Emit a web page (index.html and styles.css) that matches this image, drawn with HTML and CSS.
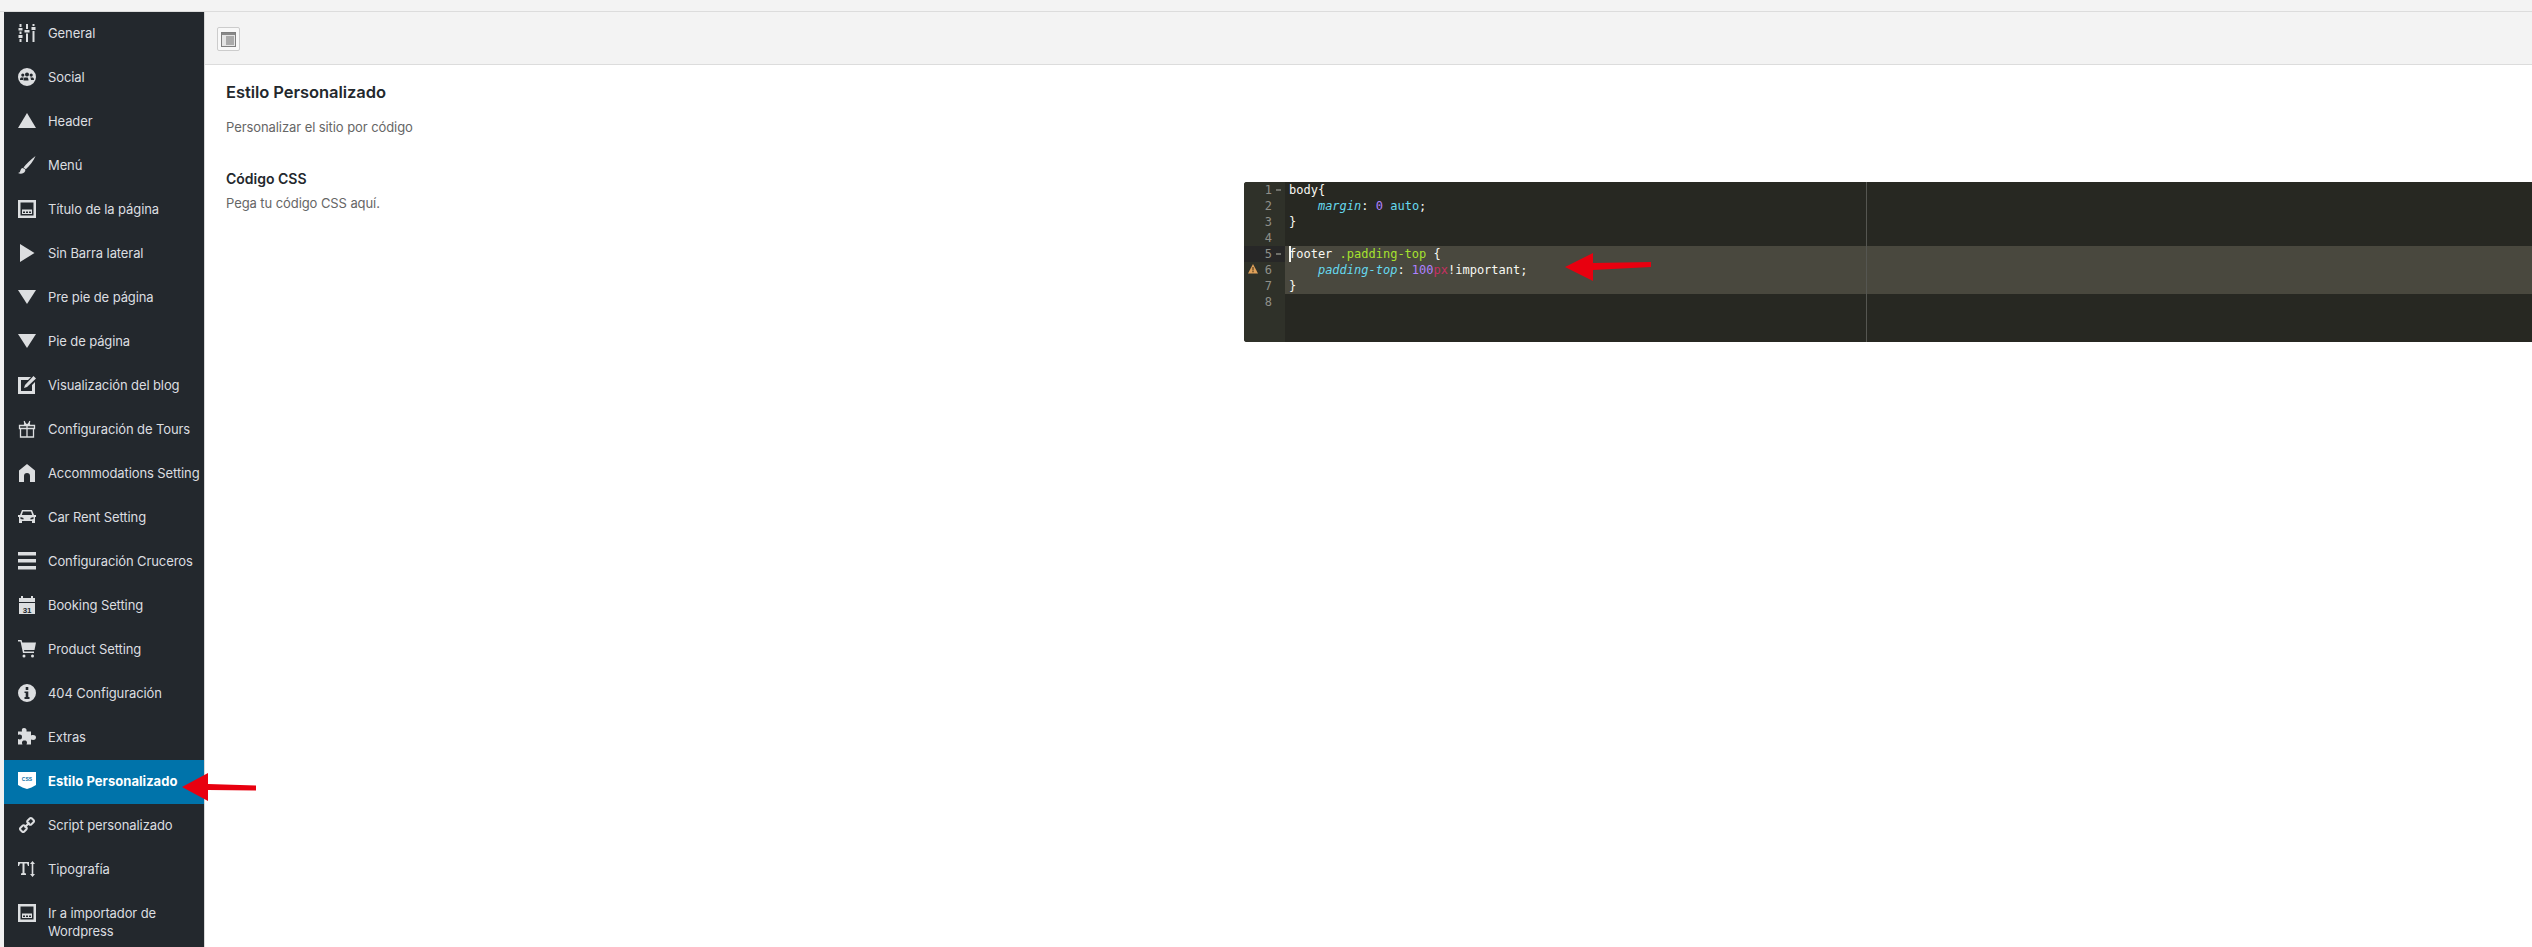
FILE: index.html
```html
<!DOCTYPE html>
<html lang="es">
<head>
<meta charset="utf-8">
<title>Estilo Personalizado</title>
<link rel="stylesheet" href="styles.css">
</head>
<body>
<div class="topstrip"></div>
<div class="layout">
  <nav class="sidebar">
    <a class="item"><svg class="ico" viewBox="0 0 18 18"><path d="M1.500 0h2v3h-2zM.5 4h4v2.500h-4zM1.500 7.500h2V10h-2zM.5 11h4v3h-4zM1.500 15h2v3h-2zM8 0h2v5H8zM6.500 6h5v2.500h-5zM8 9.500h2V18H8zM14.500 0h2v2h-2zM13.500 3h4v3h-4zM14.500 7h2v11h-2z"/></svg><span>General</span></a>
    <a class="item"><svg class="ico" viewBox="0 0 18 18"><path fill-rule="evenodd" d="M9 0a9 9 0 1 1 0 18A9 9 0 0 1 9 0zM9 4.500a2 2 0 1 0 0 4 2 2 0 0 0 0-4zM4.800 5.500a1.600 1.600 0 1 0 0 3.200 1.600 1.600 0 0 0 0-3.200zM13.200 5.500a1.600 1.600 0 1 0 0 3.200 1.600 1.600 0 0 0 0-3.200zM3 9.500c-.8.500-1 1.500-1 2.500h3c0-1 .2-1.700.8-2.500zM6.500 9.500c-.8.700-1 2-1 3h5c0-1-.2-2.300-1-3zM12.200 9.500c.6.800.8 1.500.8 2.500h3c0-1-.2-2-1-2.500z"/></svg><span>Social</span></a>
    <a class="item"><svg class="ico" viewBox="0 0 18 18"><path d="M9 1l9 15H0z"/></svg><span>Header</span></a>
    <a class="item"><svg class="ico" viewBox="0 0 18 18"><path d="M17.500 0C13 3.500 8 8 5.500 11.500l2.300 1.800C11.500 10 15.500 5 17.500 0zM4.700 12c-2.200.4-2.200 2.800-2.700 3.800-.3.700-1 1-2 1.200 2.500 1.200 6 .8 7.200-2 .3-.8 0-1.600-.5-2z"/></svg><span>Menú</span></a>
    <a class="item"><svg class="ico" viewBox="0 0 18 18"><path fill-rule="evenodd" d="M0 0h18v18H0zM2.500 2.500v13h13v-13zM4 9.500h10V14H4zM5 11.500v1.500h2v-1.500zM8 11.500v1.500h2v-1.500zM11 11.500v1.500h2v-1.500z"/></svg><span>Título de la página</span></a>
    <a class="item"><svg class="ico" viewBox="0 0 18 18"><path d="M2 0l14.500 9L2 18z"/></svg><span>Sin Barra lateral</span></a>
    <a class="item"><svg class="ico" viewBox="0 0 18 18"><path d="M0 2h18L9 16z"/></svg><span>Pre pie de página</span></a>
    <a class="item"><svg class="ico" viewBox="0 0 18 18"><path d="M0 2h18L9 16z"/></svg><span>Pie de página</span></a>
    <a class="item"><svg class="ico" viewBox="0 0 18 18"><path d="M0 1h13l-3 3H3v11h11V9l3-3v12H0zM15.500 0L18 2.500 9 11l-3 1 1-3z"/></svg><span>Visualización del blog</span></a>
    <a class="item"><svg class="ico gift" viewBox="0 0 18 18"><path d="M1.500 5.500h15v3h-15zM2.500 8.500v8.500h13V8.500M9 5.500V17M9 5C7 3.500 6 2 6.500 1M9 5c2-1.500 3-3 2.500-4M9 5L6 3.800M9 5l3-1.200"/></svg><span>Configuración de Tours</span></a>
    <a class="item"><svg class="ico" viewBox="0 0 18 18"><path d="M9 0l8 6.500V18h-5v-6a3 3 0 0 0-6 0v6H1V6.500z"/></svg><span>Accommodations Setting</span></a>
    <a class="item"><svg class="ico" viewBox="0 0 18 18"><path fill-rule="evenodd" d="M4 2h10l2 5h2v2h-1v6h-3v-2H4v2H1V9H0V7h2zM5 3.500L3.800 7h10.400L13 3.500zM2.500 9v2l3 .5V10zM15.500 9l-3 1v1.500l3-.5z"/></svg><span>Car Rent Setting</span></a>
    <a class="item"><svg class="ico" viewBox="0 0 18 18"><path d="M0 0h18v3.500H0zM0 7h18v3.500H0zM0 14h18v3.500H0z"/></svg><span>Configuración Cruceros</span></a>
    <a class="item"><svg class="ico" viewBox="0 0 18 18"><path d="M3 0h2v2h8V0h2v2h2v4H1V2h2zM1 7h16v11H1z"/><text class="cal" x="9" y="16.500">31</text></svg><span>Booking Setting</span></a>
    <a class="item"><svg class="ico" viewBox="0 0 18 18"><path d="M0 0h3.500l.8 2.500H18l-1.500 7.500H6l.3 1.500H16V13H5L2.500 1.500H0z"/><circle cx="6" cy="16" r="1.500"/><circle cx="14.500" cy="16" r="1.500"/></svg><span>Product Setting</span></a>
    <a class="item"><svg class="ico" viewBox="0 0 18 18"><path fill-rule="evenodd" d="M9 0a9 9 0 1 1 0 18A9 9 0 0 1 9 0zM7.700 3v3h2.600V3zM6.500 7.500V9h1.200v4H6.500v2h5v-2h-1.200V7.500z"/></svg><span>404 Configuración</span></a>
    <a class="item"><svg class="ico" viewBox="0 0 18 18"><path d="M6 0c2 0 3 1.200 2.500 3.500H13v4c2-1 5-.5 5 2s-3 3-5 2v5H8.500c1-2 .5-4-2-4s-3 2-2 4H0v-5.500c2 1 4 .5 4-2s-2-3-4-2V3.500h4C3.500 1.200 4 0 6 0z"/></svg><span>Extras</span></a>
    <a class="item active"><svg class="ico" viewBox="0 0 18 18"><path d="M0 0h18v13c-3 2-6 3-9 4-3-1-6-2-9-4z"/><text class="css" x="9" y="9">CSS</text></svg><span>Estilo Personalizado</span></a>
    <a class="item"><svg class="ico chain" viewBox="0 0 18 18"><path d="M9.500 4.800l2.500-2.500a1.200 1.200 0 0 1 1.700 0l2 2a1.200 1.200 0 0 1 0 1.700l-2.500 2.500a1.200 1.200 0 0 1-1.700 0l-2-2a1.200 1.200 0 0 1 0-1.700zM2.300 12l2.500-2.500a1.200 1.200 0 0 1 1.700 0l2 2a1.200 1.200 0 0 1 0 1.700l-2.500 2.500a1.200 1.200 0 0 1-1.700 0l-2-2a1.200 1.200 0 0 1 0-1.700zM6.500 11.500l5-5"/></svg><span>Script personalizado</span></a>
    <a class="item"><svg class="ico" viewBox="0 0 18 18"><path d="M0 2h11v4h-1l-1-2.500H6.500V13l1.500.5V15H3v-1.500l1.500-.5V3.500H2L1 6H0zM14.500 1l2.500 3h-1.700v10H17l-2.500 3-2.500-3h1.700V4H12z"/></svg><span>Tipografía</span></a>
    <a class="item"><svg class="ico" viewBox="0 0 18 18"><path fill-rule="evenodd" d="M0 0h18v18H0zM2.500 2.500v13h13v-13zM4 9.500h10V14H4zM5 11.500v1.500h2v-1.500zM8 11.500v1.500h2v-1.500zM11 11.500v1.500h2v-1.500z"/></svg><span>Ir a importador de Wordpress</span></a>
  </nav>
  <main class="main">
    <div class="toolbar">
      <button class="layout-btn" type="button" aria-label="Diseño"><span class="layout-glyph"><span class="layout-glyph-fill"></span></span></button>
    </div>
    <section class="content">
      <h2 class="title">Estilo Personalizado</h2>
      <p class="desc">Personalizar el sitio por código</p>
      <div class="field">
        <div class="field-info">
          <h3 class="label">Código CSS</h3>
          <p class="hint">Pega tu código CSS aquí.</p>
        </div>
        <div class="editor">
          <div class="gutter">
            <div class="gl">1<i class="fold"></i></div>
            <div class="gl">2</div>
            <div class="gl">3</div>
            <div class="gl">4</div>
            <div class="gl gl-active">5<i class="fold"></i></div>
            <div class="gl"><svg class="warn" viewBox="0 0 10 10"><path d="M5 0l5 9.500H0z"/><path class="warn-mark" d="M4.500 3h1v3.500h-1zM4.500 7h1v1.300h-1z"/></svg>6</div>
            <div class="gl">7</div>
            <div class="gl">8</div>
          </div>
          <div class="code">
            <div class="cl"><span class="w">body{</span></div>
            <div class="cl">    <em class="prop">margin</em><span class="w">:</span> <span class="num">0</span> <span class="val">auto</span><span class="w">;</span></div>
            <div class="cl"><span class="w">}</span></div>
            <div class="cl"></div>
            <div class="cl sel"><span class="cursor"></span><span class="w">footer</span> <span class="cls">.padding-top</span> <span class="w">{</span></div>
            <div class="cl sel">    <em class="prop">padding-top</em><span class="w">:</span> <span class="num">100</span><span class="unit">px</span><span class="w">!important;</span></div>
            <div class="cl sel"><span class="w">}</span></div>
            <div class="cl"></div>
            <div class="margin-line"></div>
          </div>
        </div>
      </div>
    </section>
  </main>
</div>
<svg class="arrow arrow-menu" viewBox="0 0 74 28"><path d="M0 14L26 0v11l48 1.500v5L26 17v11z"/></svg>
<svg class="arrow arrow-code" viewBox="0 0 86 28"><path d="M0 14L28 0v10l58-1v5l-58 3v11z"/></svg>
</body>
</html>
```
FILE: styles.css
```css
* { box-sizing: border-box; }
html, body { margin: 0; height: 947px; overflow: hidden; }
body {
  background: #f1f1f1;
  font-family: Inter, "Liberation Sans", sans-serif;
  position: relative;
}
.topstrip { height: 12px; background: #f3f3f3; border-bottom: 1px solid #dcdcdc; }
.layout { display: flex; height: 935px; padding-left: 4px; }

.sidebar { width: 201px; flex: none; background: #23282d; overflow: hidden; }
.item {
  display: flex;
  align-items: flex-start;
  gap: 12px;
  padding: 12px 4px 14px 14px;
  color: #dcdee0;
  font-size: 13px;
  line-height: 18px;
  letter-spacing: -0.1px;
}
.ico { width: 18px; height: 18px; flex: none; fill: #dcdee0; }
.ico.gift { fill: none; stroke: #dcdee0; stroke-width: 1.3; }
.ico.chain { fill: none; stroke: #dcdee0; stroke-width: 2; }
.cal { font: 700 8px "Liberation Sans", sans-serif; fill: #23282d; text-anchor: middle; }
.css { font: 700 5px "Liberation Sans", sans-serif; fill: #0f73aa; text-anchor: middle; }
.active { background: #0073aa; color: #fff; font-weight: 700; letter-spacing: 0.05px; }
.active .ico { fill: #fff; }

.main { flex: 1; min-width: 0; background: #fff; box-shadow: -1px 0 0 #d8d8d8; }
.toolbar { height: 53px; background: #f3f3f3; border-bottom: 1px solid #dcdcdc; padding: 15px 0 0 12px; }
.layout-btn {
  display: flex; align-items: center; justify-content: center;
  width: 23px; height: 24px; padding: 0;
  background: #f8f8f8; border: 1px solid #ccc; border-radius: 2px;
}
.layout-glyph { display: flex; width: 15px; height: 15px; padding: 3px 1px 1px 4px; border: 1px solid #7f7f7f; background: #e4e4e4; box-shadow: inset 0 2px 0 #888; }
.layout-glyph-fill { flex: 1; background: #aaa; }

.content { padding: 17px 0 0 21px; }
.title { margin: 0; font-size: 16.500px; line-height: 20px; font-weight: 600; color: #23282d; letter-spacing: -0.05px; }
.desc { margin: 15px 0 0; font-size: 13px; line-height: 20px; color: #666; letter-spacing: -0.08px; }
.field { display: grid; grid-template-columns: 1018px 1fr; margin-top: 32px; }
.label { margin: 0; font-size: 14px; line-height: 20px; font-weight: 600; color: #23282d; }
.hint { margin: 4px 0 0; font-size: 13px; line-height: 20px; color: #666; letter-spacing: -0.08px; }

.editor {
  display: flex; height: 160px; margin-top: 13px;
  background: #272822; border-radius: 3px 0 0 3px; overflow: hidden;
  font: 12px/16px "DejaVu Sans Mono", monospace;
}
.gutter { width: 41px; flex: none; background: #2f3129; color: #8f908a; }
.gl { position: relative; height: 16px; padding-right: 13px; text-align: right; }
.gl-active { background: #272727; }
.fold { position: absolute; right: 4px; top: 7px; width: 5px; height: 2px; background: #6f706a; }
.warn { position: absolute; left: 4px; top: 2px; width: 10px; height: 10px; fill: #e0a15a; }
.warn-mark { fill: #3a2a12; }
.code { position: relative; flex: 1; min-width: 0; }
.cl { height: 16px; padding-left: 4px; white-space: pre; color: #f8f8f2; }
.sel { background: #49483e; }
.w { color: #f8f8f2; }
.prop { color: #66d9ef; font-style: italic; }
.num { color: #ae81ff; }
.val { color: #66d9ef; }
.cls { color: #a6e22e; }
.unit { color: #f92672; opacity: .7; }
.cursor { position: absolute; left: 4px; width: 2px; height: 16px; background: #f8f8f0; }
.margin-line { position: absolute; left: 581px; top: 0; bottom: 0; width: 1px; background: #555651; }

.arrow { position: absolute; fill: #e8000f; }
.arrow-menu { left: 182px; top: 773px; width: 74px; height: 28px; }
.arrow-code { left: 1565px; top: 253px; width: 86px; height: 28px; }
```
